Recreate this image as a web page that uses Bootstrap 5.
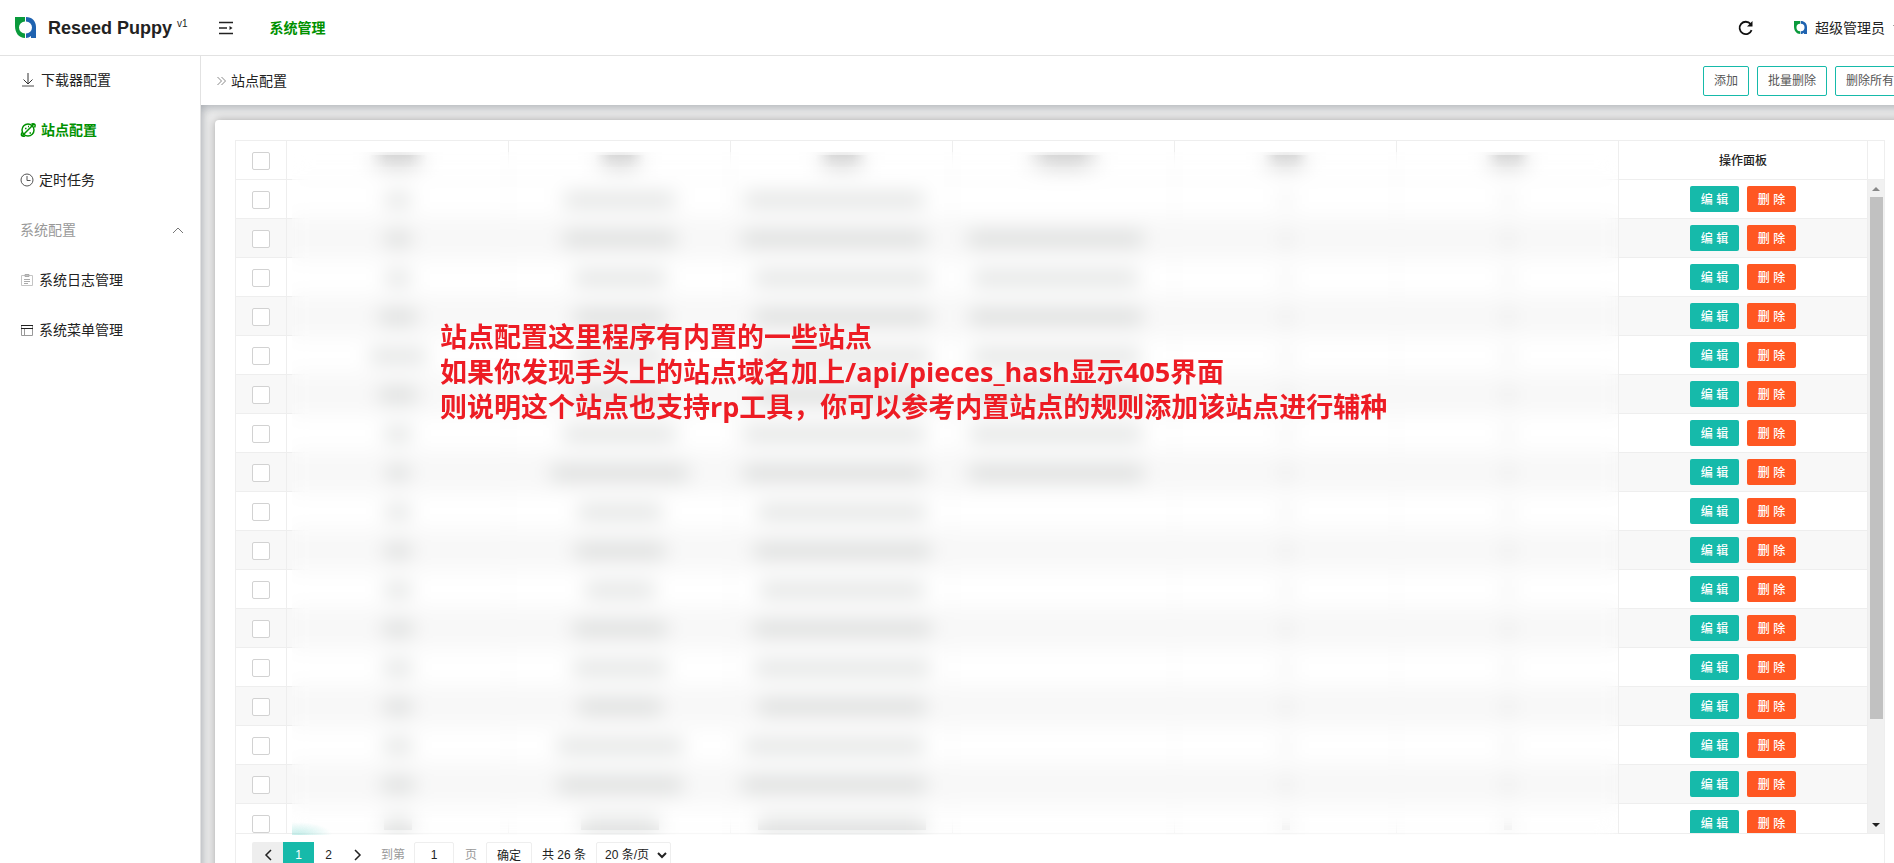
<!DOCTYPE html>
<html lang="zh-CN">
<head>
<meta charset="utf-8">
<meta name="viewport" content="width=device-width, initial-scale=1">
<title>Reseed Puppy</title>
<link rel="stylesheet" href="https://cdn.jsdelivr.net/npm/bootstrap@5.3.0/dist/css/bootstrap.min.css">
<style>
  :root { --teal: #16baaa; --line: #eee; --green: #009100; }
  body { font: 14px/20px "Liberation Sans", "Noto Sans CJK SC", sans-serif; color: #222; overflow: hidden; background: #fff; }
  a { color: inherit; text-decoration: none; }
  svg { display: block; flex: none; }
  .shell { width: calc(100% + 26px); height: calc(100vh + 12px); }
  .topbar { height: 56px; border-bottom: 1px solid #e2e2e2; padding: 0 15px; }
  .brand-name { font-size: 18px; font-weight: 700; margin-left: 12px; }
  .brand-ver { font-size: 10px; margin: -8px 0 0 5px; }
  .fold { margin-left: 30px; }
  .top-link { margin-left: 36px; }
  .user { margin-left: 40px; }
  .green { color: var(--green); font-weight: 700; }
  .plain { border: 0; background: none; padding: 0; color: inherit; }
  .side { width: 201px; border-right: 1px solid #e2e2e2; }
  .side ul { margin: -1px 0 0; }
  .side a { height: 50px; padding: 0 16px 0 20px; gap: 5px; }
  .side .group-title { color: #999; }
  .work { min-width: 0; }
  .crumbs { height: 49px; padding: 0 15px 0 16px; background: #fff; }
  .crumb-here { margin-left: -3px; }
  .btn-line { height: 30px; padding: 0 10px; border: 1px solid var(--teal); border-radius: 2px; background: #fff; color: #555; font-size: 12px; }
  .stage { background: #ededed; padding: 15px 15px 0 14px; box-shadow: inset 6px 0 8px -3px rgba(90,100,110,.25), inset 0 6px 8px -2px rgba(90,100,110,.3); }
  .panel { background: #fff; border-radius: 4px 4px 0 0; padding: 20px 20px 0; box-shadow: 0 0 8px rgba(0,0,0,.3); }
  .grid-box { border: 1px solid var(--line); border-bottom: 0; }
  .grid-area { height: 0; }
  .clip { overflow: hidden; border-bottom: 1px solid var(--line); }
  .sites { table-layout: fixed; border-collapse: separate; border-spacing: 0; margin: 0; font-size: 12px; }
  .sites th, .sites td { height: 39px; padding: 0; border: 0; border-right: 1px solid var(--line); border-bottom: 1px solid var(--line); text-align: center; vertical-align: middle; box-shadow: none; font-weight: 500; line-height: 18px; background: #fff; color: #222; }
  .sites .c-act { width: 249px; padding-top: 2px; }
  .sites tbody tr:nth-child(even) td { background: #f8f8f8; }
  .sites input { appearance: none; width: 18px; height: 18px; margin: 1px 0 0; border: 1px solid #d2d2d2; border-radius: 2px; background: #fff; display: inline-block; vertical-align: top; }
  .c-check { width: 51px; }
  .ink { display: inline-block; height: 12px; vertical-align: middle; background: rgba(10,20,15,.15); }
  th .ink { background: linear-gradient(90deg, transparent, rgba(0,0,0,.2) 30%, rgba(0,0,0,.2) 70%, transparent); }
  .ink.dot { background: rgba(0,0,0,.1); }
  .ink.long { margin-right: 16px; }
  .act { width: 49px; height: 26px; border: 0; border-radius: 2px; color: #fff; font-size: 12px; line-height: 24px; padding: 2px 0 0; font-weight: 500; }
  .edit { background: var(--teal); } .del { background: #ff5722; }
  .bar-col { width: 16px; }
  .bar-head { height: 39px; border-bottom: 1px solid var(--line); }
  .bar-track { background: #f1f1f1; }
  .bar-thumb { width: 13px; height: 80%; background: #c1c1c1; }
  .bar-end { height: 17px; }
  .frost { position: absolute; left: 56px; right: 266px; top: 11px; bottom: -1px; backdrop-filter: blur(10px);
    background: radial-gradient(ellipse 34px 13px at 6px 100%, rgba(22,186,170,.25), transparent); }
  .note { position: absolute; left: 204px; top: 178px; margin: 0; color: #ed1c24; font: 700 27px/35px "Open Sans", "Noto Sans CJK SC", sans-serif; white-space: nowrap; }
  .pager { height: 41px; padding: 8px 16px 0; font-size: 12px; }
  .pager > * { height: 26px; line-height: 26px; }
  .pg { width: 29px; display: flex; align-items: center; justify-content: center; }
  .pg.prev { width: 31px; background: #eee; border-radius: 2px 0 0 2px; }
  .pg.now { width: 31px; background: var(--teal); color: #fff; }
  .box { border: 1px solid var(--line); border-radius: 2px; background: #fff; padding: 0; text-align: center; color: #222; }
  .jump { margin-left: 9px; width: 33px; color: #999; }
  .num { width: 40px; margin-right: 11px; }
  .jump-end { width: 21px; color: #999; }
  .ok { width: 46px; margin-right: 10px; }
  .total { width: 54px; }
  .size { width: 75px; text-align: left; padding-left: 4px; }
</style>
</head>
<body>
<svg width="0" height="0" class="position-absolute">
  <symbol id="logo" viewBox="0 0 21 21">
    <path fill="#0a9a3c" d="M0 0h10v4.500a5.500 5.500 0 0 0 0 12V21C4 21 0 16 0 9z"/>
    <path fill="#1f63b0" d="M11 0c6 0 10 4 10 10v11h-5v-2c-1.500 1.300-3 2-5 2v-4.500a5.500 5.500 0 0 0 0-12z"/>
  </symbol>
</svg>
<div class="shell d-flex flex-column">
  <header class="topbar d-flex align-items-center flex-shrink-0">
    <svg width="21" height="21"><use href="#logo"/></svg>
    <span class="brand-name">Reseed Puppy</span><span class="brand-ver">v1</span>
    <button class="plain fold" aria-label="收起菜单"><svg width="16" height="14" viewBox="0 0 16 14"><path d="M1 1.500h14M1 7h8M1 12.500h14" stroke="#222" stroke-width="1.500"/><path d="M11.500 5v4l3-2z" fill="#222"/></svg></button>
    <a href="#" class="green top-link">系统管理</a>
    <div class="ms-auto d-flex align-items-center">
      <button class="plain" aria-label="刷新"><svg width="16" height="16" viewBox="0 0 16 16" fill="none" stroke="#111" stroke-width="1.800"><path d="M13.600 10.200A6.200 6.200 0 1 1 12.600 4"/><path d="M14.500 1v5.500H9z" fill="#111" stroke="none"/></svg></button>
      <a href="#" class="d-flex align-items-center gap-2 user"><svg width="13" height="13"><use href="#logo"/></svg><span>超级管理员</span><svg width="12" height="6" viewBox="0 0 12 6"><path d="M0 0h12L6 6z" fill="#444"/></svg></a>
    </div>
  </header>
  <div class="d-flex flex-fill">
    <nav class="side flex-shrink-0">
      <ul class="list-unstyled">
        <li><a href="#" class="d-flex align-items-center"><svg width="16" height="16" viewBox="0 0 16 16" fill="none" stroke="#333"><path d="M8 1v11M3.500 7.500 8 12l4.500-4.500"/><path d="M2 14h12" stroke-width="1.500" stroke="#888"/></svg>下载器配置</a></li>
        <li><a href="#" class="d-flex align-items-center green"><svg width="16" height="16" viewBox="0 0 16 16" fill="none" stroke="#009100" stroke-width="1.500"><circle cx="8" cy="8" r="6"/><path d="M2 14 14 2M2 10.500c-1.500 3 0 4.500 3 3.500M11.500 2c3-1 4.500.5 3 3.500"/><path d="M5 6.500h1.500M8 4.500h1M9.500 11H11"/></svg>站点配置</a></li>
        <li><a href="#" class="d-flex align-items-center"><svg width="14" height="14" viewBox="0 0 14 14" fill="none" stroke="#555"><circle cx="7" cy="7" r="6"/><path d="M7 3v4.500h3.500"/></svg>定时任务</a></li>
        <li><a href="#" class="d-flex align-items-center group-title">系统配置<svg class="ms-auto" width="12" height="8" viewBox="0 0 12 8" fill="none" stroke="#777"><path d="m1 7 5-5 5 5"/></svg></a></li>
        <li><a href="#" class="d-flex align-items-center"><svg width="14" height="14" viewBox="0 0 14 14" fill="none" stroke="#c4c4c4"><path d="M1.500 2.500h11v10h-11z"/><path d="M5 3.500v-2h4v2zM4 6.500h6M4 8.500h6M4 10.500h4" stroke="#aaa"/></svg>系统日志管理</a></li>
        <li><a href="#" class="d-flex align-items-center"><svg width="14" height="14" viewBox="0 0 14 14" fill="none" stroke="#999"><path d="M1.500 2.500h11v10h-11zM4.500 6v6"/><path d="M1 2.500h12M1 5.500h12" stroke="#222"/></svg>系统菜单管理</a></li>
      </ul>
    </nav>
    <main class="work flex-fill d-flex flex-column">
      <div class="crumbs d-flex align-items-center flex-shrink-0 gap-2">
        <svg width="9" height="10" viewBox="0 0 9 10" fill="none" stroke="#888"><path d="m.5 1 4 4-4 4M4.500 1l4 4-4 4"/></svg>
        <span class="crumb-here">站点配置</span>
        <button class="btn-line ms-auto">添加</button><button class="btn-line">批量删除</button><button class="btn-line">删除所有</button>
      </div>
      <div class="stage flex-fill d-flex">
        <section class="panel flex-fill d-flex">
          <div class="grid-box flex-fill d-flex flex-column">
            <div class="grid-area position-relative flex-fill d-flex">
              <div class="clip flex-fill d-flex">
                <div class="flex-fill">
                  <table class="table sites">
                    <thead><tr id="head"></tr></thead>
                    <tbody id="rows"></tbody>
                  </table>
                </div>
                <div class="bar-col flex-shrink-0 d-flex flex-column">
                  <div class="bar-head"></div>
                  <div class="bar-track flex-fill d-flex flex-column align-items-center">
                    <div class="bar-end d-flex align-items-center"><svg width="8" height="4"><path d="M0 4h8L4 0z" fill="#888"/></svg></div>
                    <div class="bar-thumb"></div>
                    <div class="bar-end d-flex align-items-center mt-auto"><svg width="8" height="4"><path d="M0 0h8L4 4z" fill="#222"/></svg></div>
                  </div>
                </div>
              </div>
              <div class="frost"></div>
              <p class="note">站点配置这里程序有内置的一些站点<br>如果你发现手头上的站点域名加上/api/pieces_hash显示405界面<br>则说明这个站点也支持rp工具，你可以参考内置站点的规则添加该站点进行辅种</p>
            </div>
            <div class="pager d-flex flex-shrink-0">
              <a href="#" class="pg prev" aria-label="上一页"><svg width="8" height="12" viewBox="0 0 8 12" fill="none" stroke="#222" stroke-width="1.500"><path d="M7 1 2 6l5 5"/></svg></a>
              <a href="#" class="pg now">1</a>
              <a href="#" class="pg">2</a>
              <a href="#" class="pg" aria-label="下一页"><svg width="8" height="12" viewBox="0 0 8 12" fill="none" stroke="#222" stroke-width="1.500"><path d="m1 1 5 5-5 5"/></svg></a>
              <label for="page" class="jump">到第</label>
              <input id="page" class="box num" value="1">
              <span class="jump-end">页</span>
              <button class="box ok">确定</button>
              <span class="total">共 26 条</span>
              <select class="box size" aria-label="每页条数"><option>20 条/页</option></select>
            </div>
          </div>
        </section>
      </div>
    </main>
  </div>
</div>
<script src="https://cdn.jsdelivr.net/npm/bootstrap@5.3.0/dist/js/bootstrap.bundle.min.js"></script>
<script>
  const ink = (w, col) => {
    if (!w) return '';
    const kind = w < 10 ? ' dot' : (col === 3 || w >= 180) ? ' long' : '';
    return `<span class="ink${kind}" style="width:${w}px"></span>`;
  };
  const head = [60, 52, 54, 80, 48, 48];
  const rows = [
    [24,111,180,0],[26,113,184,175],[24,92,176,165],[38,92,176,172],[56,92,176,168],[38,92,176,170],
    [26,113,182,172],[22,137,182,174],[24,84,168,0],[26,90,176,0],[26,70,164,0],[30,94,178,0],
    [28,94,176,0],[28,84,168,0],[28,126,180,0],[32,124,184,0],[28,78,168,0]
  ];
  const box = '<input type="checkbox" aria-label="选择">';
  document.getElementById('head').innerHTML =
    `<th class="c-check">${box}</th>` + head.map(w => `<th>${ink(w)}</th>`).join('') + '<th class="c-act">操作面板</th>';
  document.getElementById('rows').innerHTML = rows.map(r =>
    `<tr><td>${box}</td>${[...r, 8, 8].map((w, i) => `<td>${ink(w, i)}</td>`).join('')}` +
    '<td><div class="d-flex justify-content-center gap-2"><button class="act edit">编 辑</button><button class="act del">删 除</button></div></td></tr>').join('');
</script>
</body>
</html>
